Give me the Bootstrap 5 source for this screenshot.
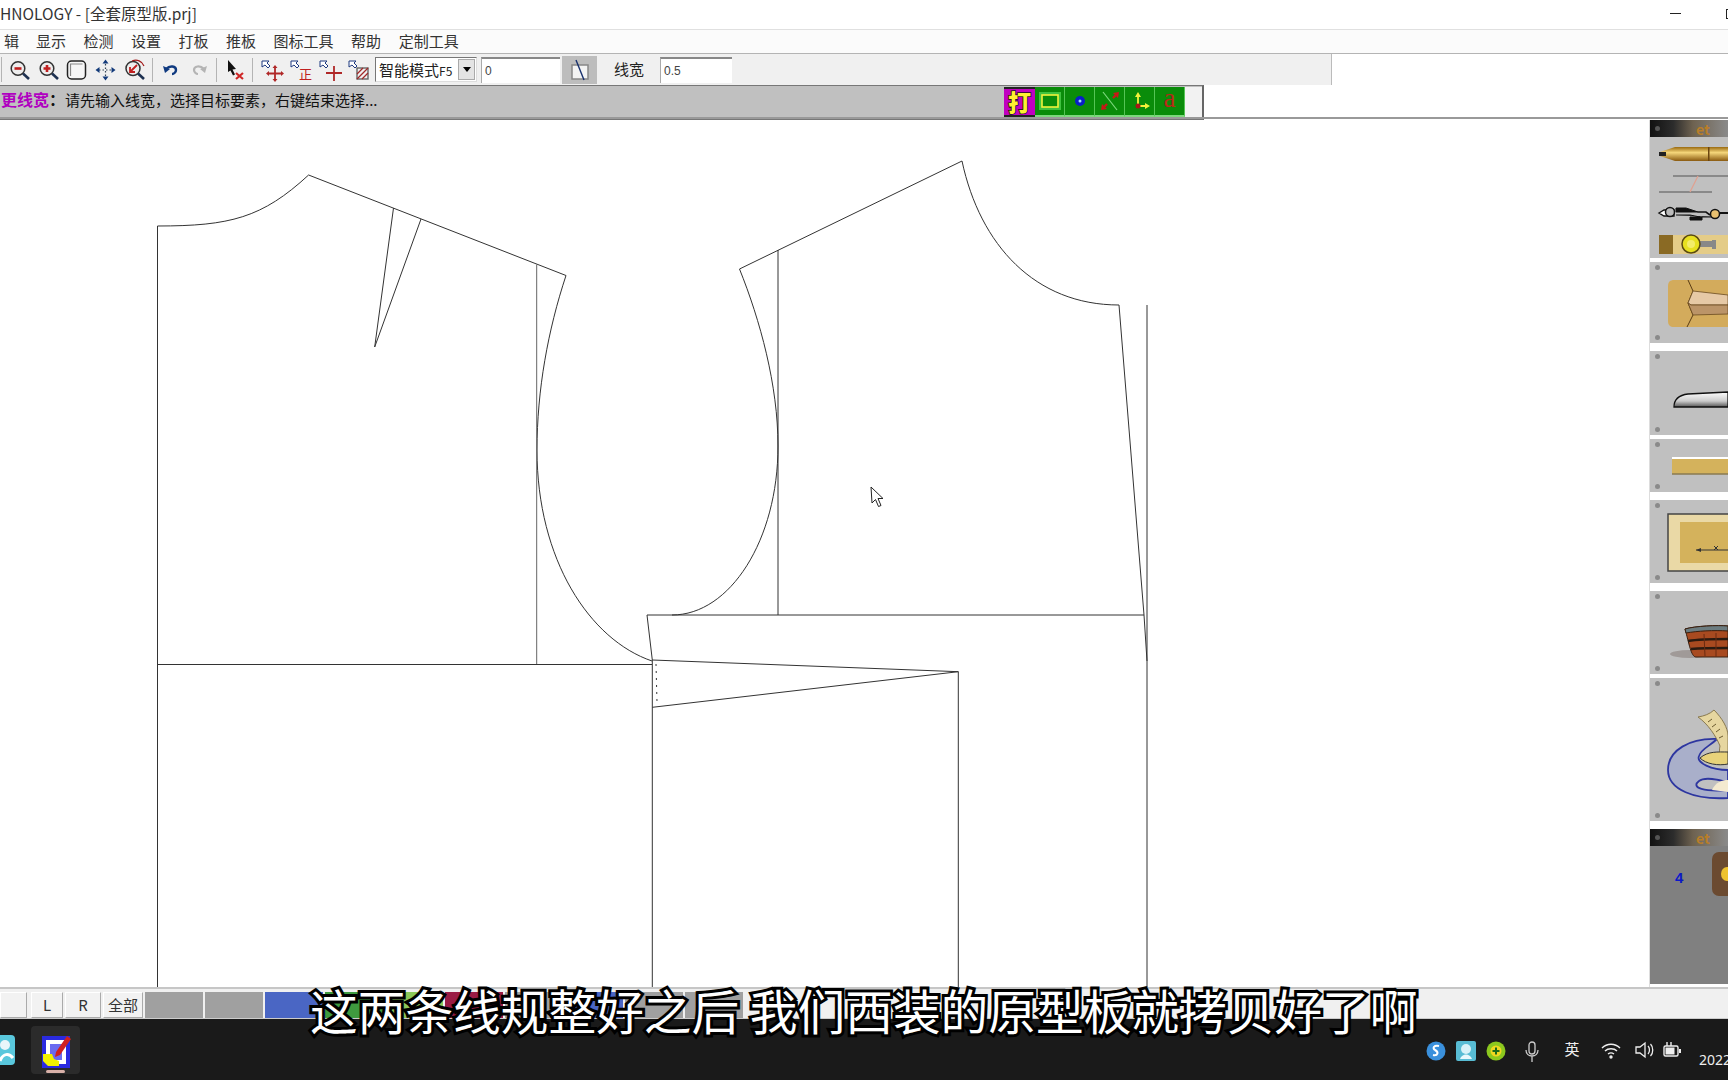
<!DOCTYPE html>
<html lang="zh">
<head>
  <meta charset="utf-8">
  <title>全套原型版.prj</title>
  <link href="https://cdn.jsdelivr.net/npm/bootstrap@5.3.3/dist/css/bootstrap.min.css" rel="stylesheet">
  <style>
    body { width: 1728px; height: 1080px; overflow: hidden; background: #fff; color: #222; font-family: "Noto Sans CJK SC", "Noto Sans", sans-serif; font-size: 14px; line-height: 1; }
    .app-shell { width: 1728px; height: 1080px; position: relative; overflow: hidden; }
    .title-row { height: 30px; background: #fff; border-bottom: 1px solid #e0e0e0; font-size: 15.500px; color: #333; white-space: nowrap; padding-bottom: 2px; }
    .win-cell-min { width: 51px; }
    .win-cell-max { width: 27px; padding-left: 25px; }
    .win-min { width: 11px; height: 1px; background: #222; }
    .win-max { width: 10px; height: 10px; flex: none; border: 1px solid #222; }
    .menu-row { height: 24px; background: #fbfbfb; border-bottom: 1px solid #b4b4b4; overflow: hidden; white-space: nowrap; color: #333; font-size: 15px; padding-bottom: 2px; }
    .menu-item { margin-right: 17.500px; }
    .menu-first { margin-left: 4px; margin-right: 17px; }
    .tool-row { height: 31px; width: 1332px; background: #f0f0f0; border-right: 1px solid #bbb; padding-left: 4px; position: relative; }
    .tool-row::before { content: ""; position: absolute; left: 1px; top: 3px; bottom: 3px; width: 1px; background: #b4b4b4; }
    .tool-cell { width: 29px; height: 26px; flex: none; }
    .tool-narrow { width: 28px; }
    .tool-sep { flex: none; width: 8px; height: 26px; position: relative; }
    .tool-sep::after { content: ""; position: absolute; left: 3px; top: 1px; bottom: 1px; width: 1px; background: #b4b4b4; }
    .mode-box { width: 102px; height: 25px; margin-left: 2px; background: #fff; border: 1px solid #777; border-right-color: #ddd; border-bottom-color: #ddd; font-size: 15px; padding-left: 3px; white-space: nowrap; }
    .mode-tail { font-size: 12px; }
    .mode-arrow { width: 17px; height: 21px; background: #e4e4e4; border: 1px solid #aaa; margin-left: auto; margin-right: 1px; flex: none; }
    .mode-arrow::after { content: ""; border-left: 4px solid transparent; border-right: 4px solid transparent; border-top: 5px solid #000; }
    .val-box { height: 26px; background: #fff; border-top: 2px solid #888; border-left: 1px solid #aaa; font-family: "Liberation Sans", sans-serif; font-size: 12px; color: #444; padding-left: 3px; }
    .val-num { width: 79px; margin-left: 4px; }
    .val-width { width: 72px; margin-left: 15px; }
    .line-btn { width: 35px; height: 28px; background: #bdbdbd; margin-left: 2px; }
    .width-label { margin-left: 17px; width: 31px; font-size: 15px; white-space: nowrap; padding-bottom: 2px; }
    .status-row { height: 35px; width: 1204px; background: #c0c0c0; border-top: 1px solid #777; border-bottom: 2px solid #777; border-right: 2px solid #666; position: relative; white-space: nowrap; }
    .status-line { height: 2px; background: #999; width: 100%; position: absolute; left: 0; top: 117px; }
    .status-key { color: #b000c0; font-weight: 700; font-size: 16px; }
    .status-colon { font-size: 16px; font-weight: 700; }
    .status-text { padding-left: 1px; padding-bottom: 6px; width: 1004px; font-size: 15px; color: #111; }
    .flag-box { background: #f2f2f2; width: 198px; height: 31px; }
    .flag-cell { width: 30px; height: 30px; background: #0a8c0a; border-right: 1px solid #55c455; border-bottom: 2px solid #7ed87e; flex: none; }
    .flag-hit { width: 31px; background: #c000c0; color: #ffef30; font-weight: 900; font-size: 23px; border-top: 2px solid #222; border-bottom: 2px solid #222; border-right: 0; -webkit-text-stroke: 1.500px #111; paint-order: stroke fill; }
    .flag-a { color: #b82818; font-size: 27px; font-family: "Liberation Serif", serif; padding-bottom: 5px; }
    .work-row { height: 867px; }
    .sheet { width: 1649px; height: 867px; display: block; background: #fff; flex: none; }
    .side-col { width: 79px; height: 867px; border-left: 1px solid #ddd; flex: none; overflow: hidden; }
    .side-head { height: 17px; background: linear-gradient(90deg, #111 0%, #2c2c2c 30%, #6e6250 55%, #8a8a8a 100%); color: #b87e28; font-size: 14px; font-weight: 700; padding-left: 46px; position: relative; flex: none; }
    .side-head::before { content: ""; position: absolute; left: 5px; top: 6px; width: 5px; height: 5px; border-radius: 50%; background: #555; }
    .side-panel { background: #c0c0c0; flex: none; position: relative; }
    .side-panel svg { display: block; }
    .side-panel::before, .side-panel.pin-both::after { content: ""; position: absolute; left: 5px; width: 5px; height: 5px; border-radius: 50%; background: #8a8a8a; }
    .side-panel::before { top: 3px; }
    .side-panel.pin-both::after { bottom: 3px; }
    .side-tools::before { display: none; }
    .side-low { background: #808080; height: 138px; color: #0b18c8; font-family: "Liberation Sans", sans-serif; font-weight: 700; font-size: 15px; position: relative; flex: none; }
    .low-num { position: absolute; left: 25px; top: 24px; }
    .low-tile { position: absolute; left: 62px; top: 6px; width: 30px; height: 44px; border-radius: 7px; background: #6b4a30; }
    .low-tile::after { content: ""; position: absolute; left: 9px; top: 15px; width: 12px; height: 14px; border-radius: 50%; background: #eec22e; }
    .foot-row { height: 32px; background: #f0f0f0; border-top: 2px solid #c6c6c6; border-bottom: 1px solid #ccc; padding-top: 2px; }
    .foot-cell { height: 26px; flex: none; margin-right: 2px; }
    .foot-btn { background: #f2f2f2; border: 1px solid #aaa; border-top-color: #fff; border-left-color: #fff; font-size: 15px; color: #333; }
    .foot-first { width: 27px; margin-right: 4px; }
    .foot-l { width: 32px; }
    .foot-r { width: 36px; }
    .foot-all { width: 40px; }
    .foot-color { width: 58px; background: #a0a0a0; }
    .swatch-blue { background: #4a66c4; }
    .swatch-green { background: #3f9a3f; }
    .swatch-lime { background: #8cc85a; }
    .swatch-wine { background: #9a1c44; }
    .dock-row { height: 62px; background: #1a1a1a; position: relative; }
    .dock-tile { width: 49px; height: 48px; background: #2b2b2b; border-radius: 4px; margin-left: 16px; position: relative; }
    .dock-mark { position: absolute; left: 15px; bottom: 1px; width: 19px; height: 3px; border-radius: 2px; background: #d8b0a8; }
    .dock-peek { width: 15px; height: 30px; overflow: hidden; flex: none; }
    .tray-row { position: absolute; left: 1421px; top: 0; height: 62px; width: 307px; color: #eee; font-size: 15px; padding-top: 22px; overflow: hidden; }
    .tray-cell { flex: none; display: flex; justify-content: center; }
    .tray-w30 { width: 30px; }
    .tray-w29 { width: 29px; }
    .tray-w43 { width: 43px; }
    .tray-w37 { width: 38px; }
    .tray-w39 { width: 39px; }
    .tray-w26 { width: 27px; }
    .tray-date { font-size: 14px; padding-top: 12px; margin-left: 12px; white-space: nowrap; font-family: "Noto Sans", sans-serif; }
    .caption-text { position: absolute; left: 310px; top: 981px; font-size: 47.700px; line-height: 58px; font-weight: 400; color: #fff; white-space: pre; -webkit-text-stroke: 6px #000; paint-order: stroke fill; font-family: "Noto Sans CJK SC", sans-serif; }
  </style>
</head>
<body>
<div class="app-shell">

  <div class="title-row d-flex align-items-center justify-content-between">
    <span>HNOLOGY - [全套原型版.prj]</span>
    <div class="d-flex align-items-center">
      <span class="win-cell-min d-flex align-items-center justify-content-center"><span class="win-min"></span></span>
      <span class="win-cell-max d-flex align-items-center overflow-hidden"><span class="win-max"></span></span>
    </div>
  </div>

  <div class="menu-row d-flex align-items-center">
    <span class="menu-item menu-first">辑</span>
    <span class="menu-item">显示</span>
    <span class="menu-item">检测</span>
    <span class="menu-item">设置</span>
    <span class="menu-item">打板</span>
    <span class="menu-item">推板</span>
    <span class="menu-item">图标工具</span>
    <span class="menu-item">帮助</span>
    <span class="menu-item">定制工具</span>
  </div>

  <div class="tool-row d-flex align-items-center">
    <span class="tool-cell"><svg width="29" height="26" viewBox="0 0 29 26"><circle cx="14" cy="11.500" r="6.800" fill="#eee" stroke="#333" stroke-width="1.500"/><path d="M19 16.500l6 5.500" stroke="#1d3050" stroke-width="2.600"/><path d="M10.500 11.500h7" stroke="#c02020" stroke-width="2.600"/></svg></span>
    <span class="tool-cell"><svg width="29" height="26" viewBox="0 0 29 26"><circle cx="14" cy="11.500" r="6.800" fill="#eee" stroke="#333" stroke-width="1.500"/><path d="M19 16.500l6 5.500" stroke="#1d3050" stroke-width="2.600"/><path d="M10.500 11.500h7M14 8v7" stroke="#c02020" stroke-width="2.600"/></svg></span>
    <span class="tool-cell"><svg width="29" height="26" viewBox="0 0 29 26"><rect x="5.500" y="4" width="18" height="18" rx="4" fill="#f6f6f6" stroke="#222" stroke-width="1.500"/><path d="M8.500 19v-12h12" fill="none" stroke="#888" stroke-width="1.200"/></svg></span>
    <span class="tool-cell"><svg width="29" height="26" viewBox="0 0 29 26"><path d="M14.500 7v12M8 13h13" stroke="#345" stroke-width="1.200" stroke-dasharray="1.500 2"/><path d="M14.500 2.500l3 4h-6zM14.500 23.500l3-4h-6zM4.500 13l4-3v6zM24.500 13l-4-3v6z" fill="#123a7a"/></svg></span>
    <span class="tool-cell"><svg width="29" height="26" viewBox="0 0 29 26"><circle cx="13" cy="11.500" r="7" fill="#eee" stroke="#333" stroke-width="1.500"/><path d="M18 16.500l6 5.500" stroke="#1d3050" stroke-width="2.600"/><path d="M17 8l-7 7M10 10v5h5" stroke="#c02020" stroke-width="1.800" fill="none"/><path d="M12 4c5-2 10 0 12 5" stroke="#a01818" stroke-width="1.200" fill="none"/></svg></span>
    <span class="tool-sep"></span>
    <span class="tool-cell tool-narrow"><svg width="28" height="26" viewBox="0 0 28 26"><path d="M6 9l2 7 5-4z" fill="#0f3a80"/><path d="M9 12c4-4 10-3 10 1 0 2-2 4-4 4" fill="none" stroke="#0f3a80" stroke-width="2.400"/></svg></span>
    <span class="tool-cell tool-narrow"><svg width="28" height="26" viewBox="0 0 28 26"><path d="M22 9l-2 7-5-4z" fill="#b4b4b4"/><path d="M19 12c-4-4-10-3-10 1 0 2 2 4 4 4" fill="none" stroke="#b4b4b4" stroke-width="2.200"/></svg></span>
    <span class="tool-sep"></span>
    <span class="tool-cell tool-narrow"><svg width="28" height="26" viewBox="0 0 28 26"><path d="M7 3l8 9-3.500.500 2.500 5-2 1-2.500-5L7 15z" fill="#111"/><path d="M15 16l7 6M22 16l-7 6" stroke="#d02828" stroke-width="2.200"/></svg></span>
    <span class="tool-sep"></span>
    <span class="tool-cell"><svg width="29" height="26" viewBox="0 0 29 26"><path d="M5 4h7l-2 2 3 3-2 2-3-3-3 2z" fill="#fff" stroke="#1e3a80"/><path d="M18 10v13M11 16.500h14" stroke="#b02828" stroke-width="1.800"/><path d="M18 8l2.500 3h-5zM18 25l2.500-3h-5zM9 16.500l3-2.500v5zM27 16.500l-3-2.500v5z" fill="#b02828"/></svg></span>
    <span class="tool-cell"><svg width="29" height="26" viewBox="0 0 29 26"><path d="M5 4h7l-2 2 3 3-2 2-3-3-3 2z" fill="#fff" stroke="#1e3a80"/><text x="13" y="22" font-size="13" fill="#c02020" font-family="Noto Sans CJK SC, sans-serif">正</text></svg></span>
    <span class="tool-cell"><svg width="29" height="26" viewBox="0 0 29 26"><path d="M5 4h7l-2 2 3 3-2 2-3-3-3 2z" fill="#fff" stroke="#1e3a80"/><path d="M19 9v15M11 16h16" stroke="#b02828" stroke-width="1.800"/></svg></span>
    <span class="tool-cell"><svg width="29" height="26" viewBox="0 0 29 26"><path d="M5 4h7l-2 2 3 3-2 2-3-3-3 2z" fill="#fff" stroke="#1e3a80"/><rect x="13" y="11" width="11" height="11" fill="none" stroke="#666" stroke-width="1.400"/><path d="M13 22l11-11M13 17l6-6M18 22l6-6" stroke="#a02828" stroke-width="1.300"/></svg></span>
    <div class="mode-box d-flex align-items-center"><span>智能模式<span class="mode-tail">F5</span></span><span class="mode-arrow d-flex align-items-center justify-content-center"></span></div>
    <div class="val-box val-num d-flex align-items-center">0</div>
    <div class="line-btn d-flex align-items-center justify-content-center"><svg width="26" height="24" viewBox="0 0 26 24"><rect x="5" y="7" width="16" height="14" fill="#f3f3f3" stroke="#888" stroke-width="1.500"/><path d="M9 2l8 20" stroke="#17306e" stroke-width="1.400"/></svg></div>
    <span class="width-label">线宽</span>
    <div class="val-box val-width d-flex align-items-center">0.5</div>
  </div>

  <div class="status-row d-flex align-items-center">
    <div class="status-text"><span class="status-key">更线宽</span><span class="status-colon">：</span>请先输入线宽，选择目标要素，右键结束选择...</div>
    <div class="flag-box d-flex">
      <span class="flag-cell flag-hit d-flex align-items-center justify-content-center">打</span>
      <span class="flag-cell d-flex align-items-center justify-content-center"><svg width="24" height="20" viewBox="0 0 24 20"><rect x="1" y="1" width="22" height="18" fill="#3fc23f"/><rect x="4" y="4" width="16" height="12" fill="#0a8c0a" stroke="#f2f23a" stroke-width="1.600"/></svg></span>
      <span class="flag-cell d-flex align-items-center justify-content-center"><svg width="14" height="14" viewBox="0 0 14 14"><circle cx="7" cy="7" r="5" fill="#0a1ec8"/><circle cx="7" cy="7" r="1.500" fill="#9fe0ff"/></svg></span>
      <span class="flag-cell d-flex align-items-center justify-content-center"><svg width="24" height="24" viewBox="0 0 24 24"><path d="M5 3l14 18" stroke="#7ed87e" stroke-width="1.200"/><path d="M3 21l6-1-5-5zM21 3l-6 1 5 5z" fill="#c81818"/><path d="M6 18l3-3M18 6l-3 3" stroke="#c81818" stroke-width="2.400"/></svg></span>
      <span class="flag-cell d-flex align-items-center justify-content-center"><svg width="24" height="24" viewBox="0 0 24 24"><path d="M10 6v11h10" fill="none" stroke="#f2f23a" stroke-width="1.800"/><path d="M10 3l3 5H7zM22 17l-5 3v-6z" fill="#f2f23a"/><circle cx="10" cy="17" r="2.500" fill="#a81818"/></svg></span>
      <span class="flag-cell flag-a d-flex align-items-center justify-content-center">a</span>
    </div>
  </div>
  <div class="status-line"></div>

  <div class="work-row d-flex">
    <svg class="sheet" viewBox="0 120 1649 867" fill="none" stroke="#333" stroke-width="1">
      <path d="M157.500 987V226C230 226 262 218 308.600 175L566 275.500C548 330 537 390 537 450C537 560 590 640 652 661"/>
      <path d="M393.500 208L374.700 347L421 219"/>
      <path d="M536.700 264.500V664.500" stroke="#666"/>
      <path d="M157.500 664.500H652"/>
      <path d="M739.500 269L962 161C980 245 1035 305 1119 305L1144 615H647L652.300 660"/>
      <path d="M739.500 269C760 320 778 385 778 446C778 540 730 615 672 615"/>
      <path d="M778 250V615" />
      <path d="M1147 305V987"/>
      <path d="M1144 615L1147 661"/>
      <path d="M652.300 660L958.300 671.700L652.300 707.300"/>
      <path d="M652.300 660V987"/>
      <path d="M958.300 671.700V987"/>
      <path d="M656 664L657 702" stroke-dasharray="2 5"/>
      <path d="M871 487l1 16 3.500-3.500 3 7 2.500-1-3-7h5z" fill="#fff" stroke="#222"/>
    </svg>

    <div class="side-col d-flex flex-column">
      <div class="side-head d-flex align-items-center">et</div>
      <div class="side-panel side-tools">
        <svg width="78" height="121" viewBox="0 0 78 121">
          <defs>
            <linearGradient id="penGold" x1="0" y1="0" x2="0" y2="1"><stop offset="0" stop-color="#9a6a10"/><stop offset=".4" stop-color="#f5d67a"/><stop offset="1" stop-color="#8a5a10"/></linearGradient>
          </defs>
          <path d="M10 15l15-5h53v14H25l-15-5z" fill="url(#penGold)"/>
          <path d="M9 15h7v4H9z" fill="#222"/>
          <path d="M58 10h1.500v14H58z" fill="#6b4510"/>
          <path d="M23 39h55M9 55h53" stroke="#777" stroke-width="1.500"/>
          <path d="M48 39l-8 16" stroke="#e0a090" stroke-width="1.200"/>
          <path d="M9 76l5-3h10v6H14z" fill="#fff" stroke="#111" stroke-width="1.400"/>
          <path d="M26 71h10l12 4H26zM26 78h14l10 2H40v3h12v-3h14" fill="#111" stroke="#111"/>
          <path d="M48 75h8l4 3" fill="none" stroke="#111" stroke-width="1.600"/>
          <circle cx="20" cy="75" r="4.500" fill="#bbb" stroke="#111" stroke-width="1.500"/>
          <circle cx="65" cy="77" r="4.500" fill="#e8c070" stroke="#111" stroke-width="1.500"/>
          <path d="M70 76h8" stroke="#111" stroke-width="2"/>
          <rect x="9" y="98" width="69" height="19" fill="#e4cc88"/>
          <rect x="9" y="98" width="14" height="19" fill="#8a6a24"/>
          <path d="M48 104h14v6H48zM62 103h4v9h-4z" fill="#888"/>
          <circle cx="41" cy="107" r="9" fill="#e8e020" stroke="#5a4a10" stroke-width="1.500"/>
          <circle cx="41" cy="107" r="4" fill="#f4ec6a"/>
        </svg>
      </div>
      <div class="side-panel pin-both mt-1">
        <svg width="78" height="81" viewBox="0 0 78 81">
          <path d="M24 18h54v47H24c-4 0-6-2-6-6V24c0-4 2-6 6-6z" fill="#d3ab5c"/>
          <path d="M38 18l5 11-5 12 5 12-6 12" stroke="#5a3c14" fill="none"/>
          <path d="M43 29l35 4v10H41l-3-2z" fill="#e6c9a6" stroke="#6a4a20" stroke-width=".8"/>
          <path d="M38 41l3 2h37v9l-35 1z" fill="#bb9468" stroke="#6a4a20" stroke-width=".8"/>
        </svg>
      </div>
      <div class="side-panel pin-both mt-2">
        <svg width="78" height="84" viewBox="0 0 78 84">
          <defs><linearGradient id="bladeFill" x1="0" y1="0" x2="0" y2="1"><stop offset="0" stop-color="#fff"/><stop offset=".6" stop-color="#ccc"/><stop offset="1" stop-color="#555"/></linearGradient></defs>
          <path d="M24 56c0-8 6-12 14-13l40-2v15z" fill="url(#bladeFill)" stroke="#111" stroke-width="1.300"/>
        </svg>
      </div>
      <div class="side-panel pin-both mt-1">
        <svg width="78" height="53" viewBox="0 0 78 53">
          <rect x="22" y="19" width="56" height="16" fill="#d4b25c"/>
          <path d="M22 19h56" stroke="#fff" stroke-width="2"/>
          <path d="M22 35h56" stroke="#8a7a50" stroke-width="1.500"/>
        </svg>
      </div>
      <div class="side-panel pin-both mt-2">
        <svg width="78" height="83" viewBox="0 0 78 83">
          <rect x="18" y="14" width="62" height="57" fill="#ead9a6" stroke="#444" stroke-width="1.500"/>
          <rect x="30" y="22" width="48" height="41" fill="#d4b25c"/>
          <path d="M46 50h32" stroke="#333"/>
          <path d="M46 50l5-2v4z" fill="#333"/>
          <path d="M64 46l4 4M68 46l-4 4" stroke="#333"/>
        </svg>
      </div>
      <div class="side-panel pin-both mt-2">
        <svg width="78" height="83" viewBox="0 0 78 83">
          <ellipse cx="40" cy="63" rx="20" ry="4" fill="#a09a98"/>
          <path d="M35 38c10-3 33-4 43-3v31H46c-5 0-7-14-11-28z" fill="#a84a20" stroke="#3a2010"/>
          <path d="M35 38c10-3 33-4 43-3v5c-14-1-31 0-42 2z" fill="#6c7c80" stroke="#3a2010"/>
          <path d="M38 50c12-2 27-2 40-2M41 58c12-1 26-1 37-1" stroke="#2a1a10" stroke-width="2.500" fill="none"/>
          <path d="M54 43l1 22M66 42v24" stroke="#6a2a10"/>
        </svg>
      </div>
      <div class="side-panel pin-both mt-1">
        <svg width="78" height="143" viewBox="0 0 78 143">
          <path d="M67 61C40 60 18 72 18 92C18 112 45 122 78 120V112C55 114 40 110 49 103C55 98 70 102 78 104V92C62 92 46 85 49 78C51 71 60 68 67 61Z" fill="#a9afca" stroke="#2d36a0" stroke-width="1.800"/>
          <path d="M64 32C72 40 78 50 78 58V84C72 82 68 76 70 68C66 58 58 46 48 39C54 38 60 36 64 32Z" fill="#e6d6a0" stroke="#8a7a50"/>
          <path d="M58 44l4-3M62 49l4-3M66 54l4-3M69 60l4-2" stroke="#6a5a30"/>
          <path d="M50 80c8-7 18-6 28-6v12c-10 2-22 0-28-6z" fill="#e8d27a" stroke="#333"/>
          <path d="M62 112c4-8 10-10 16-10v12z" fill="#f4ead0"/>
        </svg>
      </div>
      <div class="side-head d-flex align-items-center mt-2">et</div>
      <div class="side-low">
        <span class="low-num">4</span>
        <span class="low-tile"></span>
      </div>
    </div>
  </div>

  <div class="foot-row d-flex align-items-center">
    <span class="foot-cell foot-btn foot-first"></span>
    <span class="foot-cell foot-btn foot-l d-flex align-items-center justify-content-center">L</span>
    <span class="foot-cell foot-btn foot-r d-flex align-items-center justify-content-center">R</span>
    <span class="foot-cell foot-btn foot-all d-flex align-items-center justify-content-center">全部</span>
    <span class="foot-cell foot-color"></span>
    <span class="foot-cell foot-color"></span>
    <span class="foot-cell foot-color swatch-blue"></span>
    <span class="foot-cell foot-color swatch-green"></span>
    <span class="foot-cell foot-color swatch-lime"></span>
    <span class="foot-cell foot-color swatch-wine"></span>
    <span class="foot-cell foot-color"></span>
    <span class="foot-cell foot-color swatch-blue"></span>
    <span class="foot-cell foot-color"></span>
    <span class="foot-cell foot-color"></span>
  </div>

  <div class="dock-row d-flex align-items-center">
    <span class="dock-peek"><svg width="15" height="30" viewBox="0 0 15 30"><rect x="-12" y="0" width="27" height="30" rx="4" fill="#59c7dc"/><circle cx="5" cy="10" r="5" fill="#e9f6fa"/><path d="M0 26c3-8 9-8 13-3" stroke="#fff" stroke-width="3" fill="none"/></svg></span>
    <div class="dock-tile d-flex align-items-start justify-content-center pt-2">
      <svg width="32" height="34" viewBox="0 0 32 34"><rect x="3" y="3" width="26" height="30" fill="#fff"/><rect x="4" y="4" width="24" height="28" fill="none" stroke="#2a2ae0" stroke-width="4"/><path d="M10 10h12v16H10z" fill="#6a6af0"/><path d="M3 20h9l2 5 5 2v5H8l-5-5z" fill="#f2f200"/><path d="M16 18l11-16 4 3-11 16-5 2z" fill="#d02020"/></svg>
      <span class="dock-mark"></span>
    </div>
    <div class="tray-row d-flex">
      <span class="tray-cell tray-w30"><svg width="20" height="20" viewBox="0 0 20 20"><circle cx="10" cy="10" r="9.500" fill="#3a90dc"/><path d="M13 5c-5-1-7 2-4 4 4 2 3 6-2 5" stroke="#fff" stroke-width="2" fill="none"/></svg></span>
      <span class="tray-cell tray-w30"><svg width="20" height="20" viewBox="0 0 20 20"><rect width="20" height="20" rx="2" fill="#58bcd4"/><circle cx="10" cy="8" r="5" fill="#d8f2f8"/><path d="M4 18c2-6 10-6 12 0" fill="#e8f8fc"/></svg></span>
      <span class="tray-cell tray-w29"><svg width="20" height="20" viewBox="0 0 20 20"><circle cx="10" cy="10" r="9.500" fill="#8cc81e"/><circle cx="10" cy="10" r="5.500" fill="#f0d820"/><path d="M10 6.500v7M6.500 10h7" stroke="#1a6a1a" stroke-width="2"/></svg></span>
      <span class="tray-cell tray-w43"><svg width="16" height="22" viewBox="0 0 16 22" fill="none" stroke="#ccc" stroke-width="1.300"><rect x="5" y="1" width="6" height="12" rx="3"/><path d="M2 9c0 8 12 8 12 0M8 15v6"/></svg></span>
      <span class="tray-cell tray-w37">英</span>
      <span class="tray-cell tray-w39"><svg width="20" height="18" viewBox="0 0 20 18" fill="none" stroke="#eee" stroke-width="1.400"><path d="M1 7c5-5 13-5 18 0M4 10c3-3 9-3 12 0M7 13c2-1.500 4-1.500 6 0"/><circle cx="10" cy="16" r="1" fill="#eee"/></svg></span>
      <span class="tray-cell tray-w26"><svg width="20" height="18" viewBox="0 0 20 18" fill="none" stroke="#eee" stroke-width="1.300"><path d="M2 6h4l5-4v14l-5-4H2z"/><path d="M14 5c2 2 2 6 0 8M16.500 3c3 3 3 9 0 12"/></svg></span>
      <span class="tray-cell tray-w30"><svg width="20" height="18" viewBox="0 0 20 18"><rect x="2" y="5" width="14" height="10" rx="1.500" fill="none" stroke="#eee" stroke-width="1.400"/><rect x="3.500" y="6.500" width="9" height="7" fill="#eee"/><path d="M17 8h2v4h-2z" fill="#eee"/><path d="M5 1v4M9 1v4" stroke="#eee" stroke-width="1.400"/></svg></span>
      <span class="tray-date">2022</span>
    </div>
  </div>

  <div class="caption-text">这两条线规整好之后 我们西装的原型板就拷贝好了啊</div>
</div>
<script src="https://cdn.jsdelivr.net/npm/bootstrap@5.3.3/dist/js/bootstrap.bundle.min.js"></script>
</body>
</html>
